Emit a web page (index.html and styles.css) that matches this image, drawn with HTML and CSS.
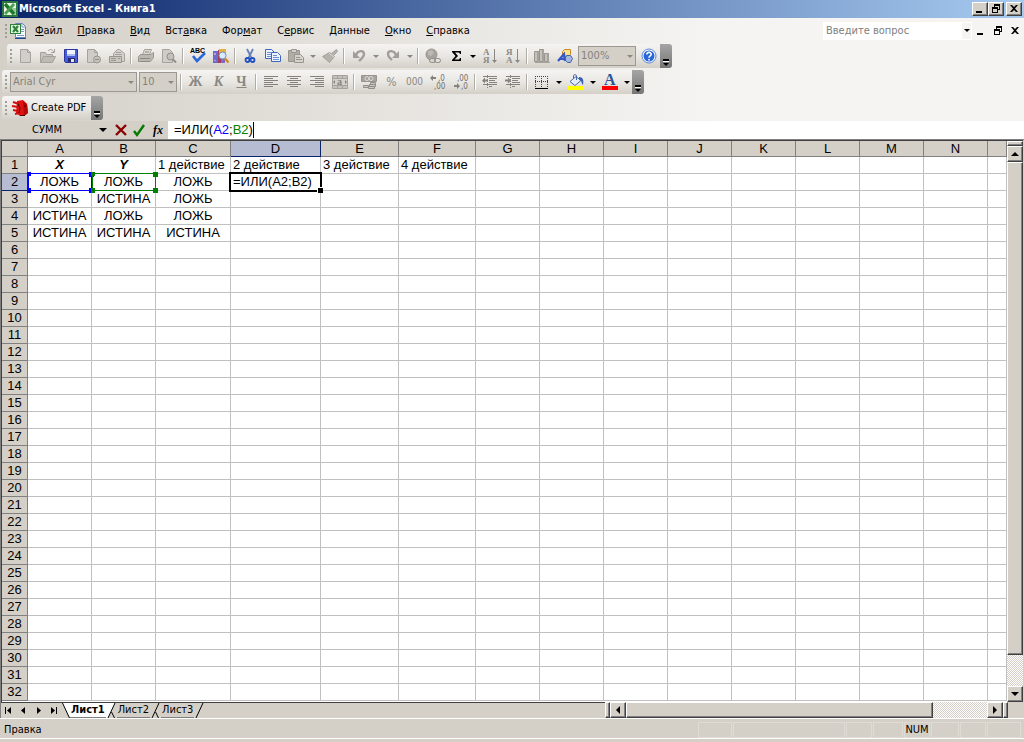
FILE: index.html
```html
<!DOCTYPE html>
<html lang="ru">
  <head>
    <meta charset="utf-8" />
    <title>Microsoft Excel - Книга1</title>
    <link rel="stylesheet" href="styles.css">
  </head>
  <body>
    <header class="titlebar">
      <svg class="icon" viewBox="0 0 16 16"><path fill="#2b7a3b" d="M0 0h16v16H0z"/><path fill="#e9f4e6" d="M2 2h12v12H2z"/><path fill="#9ccb98" d="M10 7h4v7h-4z"/><path stroke="#1c7a2c" stroke-width="3.400" d="M3 3l9 10"/><path stroke="#4aa04c" stroke-width="2.800" d="M12 3L3 13"/></svg>
      <h1>Microsoft Excel - Книга1</h1>
      <div class="window-buttons">
        <button aria-label="Свернуть"><svg viewBox="0 0 12 10"><path d="M2 7h6v2H2z"/></svg></button>
        <button aria-label="Восстановить"><svg viewBox="0 0 12 10"><path fill-rule="evenodd" d="M4 0h6v6H8v3H2V3h2zM5 2v1h3v2h1V2zM3 5v3h4V5z"/></svg></button>
        <button class="close" aria-label="Закрыть"><svg viewBox="0 0 12 10"><path d="M2 1h2l2 2 2-2h2L7 4.500l3 3.500H8L6 6 4 8H2l3-3.500z"/></svg></button>
      </div>
    </header>

    <div class="docks">
      <nav class="menubar">
        <span class="grip"></span>
        <svg class="icon" viewBox="0 0 16 16"><path fill="#f8fbff" stroke="#6382b8" d="M5.500.5h7l3 3v11h-10z"/><path fill="none" stroke="#7d9bd0" d="M12 1v3h3M11 6.500h3M11 8.500h3M7 12.500h7"/><path fill="#2d8239" d="M0 1h11v10H0z"/><path fill="#e8f4e4" d="M1 2h9v8H1z"/><path stroke="#2d8239" stroke-width="2.200" d="M3 3l5 6M8 3L3 9"/><path stroke="#27458a" d="M5 15.500h11"/></svg>
        <button><u>Ф</u>айл</button>
        <button><u>П</u>равка</button>
        <button><u>В</u>ид</button>
        <button>Вст<u>а</u>вка</button>
        <button>Фор<u>м</u>ат</button>
        <button>С<u>е</u>рвис</button>
        <button><u>Д</u>анные</button>
        <button><u>О</u>кно</button>
        <button><u>С</u>правка</button>
        <div class="question">
          <input type="text" placeholder="Введите вопрос" aria-label="Введите вопрос">
          <button class="drop" aria-label="Список вопросов"></button>
        </div>
        <div class="book-buttons">
          <button aria-label="Свернуть окно"><svg viewBox="0 0 12 10"><path d="M2 7h6v2H2z"/></svg></button>
          <button aria-label="Восстановить окно"><svg viewBox="0 0 12 10"><path fill-rule="evenodd" d="M4 0h6v6H8v3H2V3h2zM5 2v1h3v2h1V2zM3 5v3h4V5z"/></svg></button>
          <button aria-label="Закрыть окно"><svg viewBox="0 0 12 10"><path d="M2 1h2l2 2 2-2h2L7 4.500l3 3.500H8L6 6 4 8H2l3-3.500z"/></svg></button>
        </div>
      </nav>

      <div class="toolbar standard">
        <span class="grip"></span>
        <button class="tool" disabled aria-label="Создать"><svg viewBox="0 0 16 16"><path fill="#d2cfca" stroke="#a5a29d" d="M3.500 1.500h7l3 3v10h-10z"/><path fill="none" stroke="#a5a29d" d="M10.500 1.500v3h3"/></svg></button>
        <button class="tool" disabled aria-label="Открыть"><svg viewBox="0 0 16 16"><path fill="#c7c4be" stroke="#a5a29d" d="M.5 14.500v-10h5l1 2h6v2"/><path fill="#bebbb5" stroke="#a5a29d" d="M.5 14.500l3-6h12l-3 6z"/><path fill="none" stroke="#a5a29d" d="M8 3c2-2 4-2 6 1M14.500 1v3.500H11"/></svg></button>
        <button class="tool" aria-label="Сохранить"><svg viewBox="0 0 16 16"><path fill="#4a5cd6" stroke="#2a35a0" d="M1.500 1.500h13v13h-12l-1-1z"/><path fill="#eef3fd" d="M4 2h8v6H4z"/><path fill="#a9bcf0" d="M4 6h8v2H4z"/><path fill="#252c6e" d="M5 10h7v4H5z"/><path fill="#e4e6ee" d="M8 11h3v3H8z"/></svg></button>
        <button class="tool" disabled aria-label="Разрешения"><svg viewBox="0 0 16 16"><path fill="#cfccc7" stroke="#a5a29d" d="M1.500 1.500h7l3 3v10h-10z"/><path fill="none" stroke="#a5a29d" d="M8.500 1.500v3h3"/><circle cx="11" cy="11.500" r="3.500" fill="#c5c2bc" stroke="#98958f"/><path fill="#8f8c87" d="M9 11h4v1H9z"/></svg></button>
        <button class="tool" disabled aria-label="Отправить"><svg viewBox="0 0 16 16"><path fill="#d5d2cd" stroke="#a5a29d" d="M4.500 5.500l4-4h2l5 4v8h-11z"/><path fill="none" stroke="#a5a29d" d="M7 4.500h5M6 6.500h7"/><path fill="#cac7c1" stroke="#98958f" d="M.5 8.500h12v6H.5z"/><path fill="none" stroke="#98958f" d="M2 10.500h5M9 10.500h2M2 12.500h5"/></svg></button>
        <span class="separator"></span>
        <button class="tool" disabled aria-label="Печать"><svg viewBox="0 0 16 16"><path fill="#dddad6" stroke="#a5a29d" d="M4.500 6.500l2-5h7l-2 5"/><path fill="#bbb8b2" stroke="#98958f" d="M2.500 6.500h10l3-2v5l-3 4h-12v-5z"/><path fill="none" stroke="#8d8a85" d="M2 10.500h10M3 13.500h8M7 4h4"/></svg></button>
        <button class="tool" disabled aria-label="Предварительный просмотр"><svg viewBox="0 0 16 16"><path fill="#d0cdc8" stroke="#a5a29d" d="M1.500 1.500h7l3 3v10h-10z"/><circle cx="9.500" cy="8.500" r="3.500" fill="#c4c1bb" stroke="#918e89"/><path stroke="#918e89" stroke-width="2" d="M12 11.500l3 3"/></svg></button>
        <span class="separator"></span>
        <button class="tool" aria-label="Орфография"><svg viewBox="0 0 16 16"><text x="0" y="5" class="abc">ABC</text><path fill="none" stroke="#2b68d8" stroke-width="2.600" d="M3 8l4 5 8-8"/></svg></button>
        <button class="tool" aria-label="Справочные материалы"><svg viewBox="0 0 16 16"><path fill="#6a6cc8" d="M0 3h5v12H0z"/><path fill="#b9a2dc" d="M1 5h2v2H1zM1 12h2v1H1z"/><path fill="#a43d5d" d="M5 2h3v13H5z"/><path fill="#e2b23c" d="M6 1h7v6H6z"/><path fill="#7c6bc8" d="M8 11h4v4H8z"/><circle cx="9.500" cy="7.500" r="3.500" fill="#d7ecff" stroke="#7d8cb0"/><path stroke="#d08a25" stroke-width="2.400" d="M12 10.500l3.500 4"/></svg></button>
        <span class="separator"></span>
        <button class="tool" aria-label="Вырезать"><svg viewBox="0 0 16 16"><path stroke="#6582b8" stroke-width="1.800" d="M5 1l4.500 9M11 1L6.500 10"/><circle cx="5.500" cy="12" r="2" fill="none" stroke="#1f4fc0" stroke-width="1.800"/><circle cx="10.500" cy="12" r="2" fill="none" stroke="#1f4fc0" stroke-width="1.800"/></svg></button>
        <button class="tool" aria-label="Копировать"><svg viewBox="0 0 16 16"><path fill="#edf4ff" stroke="#3f66b8" d="M.5 1.500h6l3 3v6h-9z"/><path stroke="#6c8fd4" d="M2 4.500h4M2 6.500h5M2 8.500h5"/><path fill="#edf4ff" stroke="#3f66b8" d="M6.500 4.500h6l3 3v6h-9z"/><path stroke="#6c8fd4" d="M8 7.500h4M8 9.500h6M8 11.500h6"/></svg></button>
        <button class="tool" disabled aria-label="Вставить"><svg viewBox="0 0 16 16"><path fill="#b0ada7" stroke="#98958f" d="M.5 2.500h11v11H.5z"/><path fill="#d5d2cd" stroke="#98958f" d="M3.500 1.500h5v3h-5zM6.500 6.500h6l3 3v5h-9z"/><path stroke="#98958f" d="M8 9.500h4M8 11.500h6"/></svg></button>
        <button class="drop off" disabled aria-label="Параметры вставки"></button>
        <button class="tool" disabled aria-label="Формат по образцу"><svg viewBox="0 0 16 16"><path fill="#b5b2ac" stroke="#a5a29d" d="M14.500 1.500l-5 4-2-1-7 4 7 6 5-6-1-1 4-4z"/><path stroke="#dedbd6" d="M7 5l5 4"/></svg></button>
        <span class="separator"></span>
        <button class="tool" disabled aria-label="Отменить"><svg viewBox="0 0 16 16"><path fill="none" stroke="#a19e99" stroke-width="2.400" d="M5 7c2-5 8-5 8-1 0 3-2 4-5 7"/><path fill="#a19e99" d="M2 3v7h7z"/></svg></button>
        <button class="drop off" disabled aria-label="Список отмены"></button>
        <button class="tool" disabled aria-label="Вернуть"><svg viewBox="0 0 16 16"><path fill="none" stroke="#a19e99" stroke-width="2.400" d="M11 7C9 2 3 2 3 6c0 3 2 4 4 6"/><path fill="#a19e99" d="M14 3v7H7z"/></svg></button>
        <button class="drop off" disabled aria-label="Список возврата"></button>
        <span class="separator"></span>
        <button class="tool" disabled aria-label="Гиперссылка"><svg viewBox="0 0 16 16"><circle cx="6.500" cy="6.500" r="5.500" fill="#a5a29d" stroke="#989590"/><path fill="#bcb9b3" d="M3 3l4-1 2 3-3 3-3-1z"/><rect x="4.500" y="10.500" width="6" height="4" rx="2" fill="#d5d2cd" stroke="#8d8a85"/><rect x="9.500" y="10.500" width="6" height="4" rx="2" fill="none" stroke="#8d8a85"/></svg></button>
        <button class="tool" aria-label="Автосумма"><svg viewBox="0 0 16 16"><path d="M4 3h9v3h-1l-1-1.500H7L10 8l-3.500 3.500H11l1-1.500h1v3H4v-1l3.500-4L4 4z"/></svg></button>
        <button class="drop" aria-label="Функции"></button>
        <button class="tool" disabled aria-label="Сортировка по возрастанию"><svg viewBox="0 0 16 16"><text x="1" y="7" class="az">А</text><text x="1" y="15" class="az">Я</text><path fill="#8b8883" d="M12 1h1v11h2l-2.500 3-2.500-3h2z"/></svg></button>
        <button class="tool" disabled aria-label="Сортировка по убыванию"><svg viewBox="0 0 16 16"><text x="1" y="7" class="az">Я</text><text x="1" y="15" class="az">А</text><path fill="#8b8883" d="M12 1h1v11h2l-2.500 3-2.500-3h2z"/></svg></button>
        <span class="separator"></span>
        <button class="tool" disabled aria-label="Мастер диаграмм"><svg viewBox="0 0 16 16"><path fill="#c5c2bc" stroke="#98958f" d="M.5 3.500h4v10h-4zM5.500 1.500h4v12h-4zM10.500 5.500h4v8h-4z"/><path fill="#a5a29d" d="M3 4h2v10H3zM8 2h2v12H8zM13 5h2v9h-2zM1 14h15v1H1z"/></svg></button>
        <button class="tool" aria-label="Рисование"><svg viewBox="0 0 16 16"><path fill="#ffe18a" stroke="#c68b28" d="M5.500 3.500l2-2h6v5l-2 2h-6z"/><path fill="#a5b8df" stroke="#4a639f" d="M9.500 7.500h4l2 3-2 4h-3l-3-3z"/><path fill="none" stroke="#3559c4" stroke-width="2.200" d="M1 13l6-7 1 7M3 11h5"/></svg></button>
        <div class="combo zoom">
          <select disabled aria-label="Масштаб"><option>100%</option></select>
          <span class="drop off"></span>
        </div>
        <button class="tool" aria-label="Справка"><svg viewBox="0 0 16 16"><circle cx="8" cy="8" r="7" fill="#fff" stroke="#5c86d8"/><circle cx="8" cy="8" r="5.500" fill="#2767d8"/><path fill="none" stroke="#fff" stroke-width="1.600" d="M5.800 6.500c0-3 4.600-2.600 4.400 0C10 8 8 7.800 8 9.800M8 11v1.500"/></svg></button>
        <button class="cap" aria-label="Параметры панели Стандартная"></button>
      </div>

      <div class="toolbar">
        <span class="grip"></span>
        <div class="combo font">
          <select disabled aria-label="Шрифт"><option>Arial Cyr</option></select>
          <span class="drop off"></span>
        </div>
        <div class="combo size">
          <select disabled aria-label="Размер"><option>10</option></select>
          <span class="drop off"></span>
        </div>
        <span class="separator"></span>
        <button class="tool letter" disabled>Ж</button>
        <button class="tool letter" disabled><i>К</i></button>
        <button class="tool letter" disabled><u>Ч</u></button>
        <span class="separator"></span>
        <button class="tool" disabled aria-label="По левому краю"><svg viewBox="0 0 16 16"><path stroke="#85827d" d="M1 2.500h14M1 4.500h9M1 6.500h14M1 8.500h9M1 10.500h14M1 12.500h9"/></svg></button>
        <button class="tool" disabled aria-label="По центру"><svg viewBox="0 0 16 16"><path stroke="#85827d" d="M1 2.500h14M4 4.500h8M1 6.500h14M4 8.500h8M1 10.500h14M4 12.500h8"/></svg></button>
        <button class="tool" disabled aria-label="По правому краю"><svg viewBox="0 0 16 16"><path stroke="#85827d" d="M1 2.500h14M6 4.500h9M1 6.500h14M6 8.500h9M1 10.500h14M6 12.500h9"/></svg></button>
        <button class="tool" disabled aria-label="Объединить ячейки"><svg viewBox="0 0 16 16"><path fill="#c4c1bb" stroke="#a5a29d" d="M.5 1.500h15v13H.5zM.5 4.500h15M.5 11.500h15M5.500 1.500v3M10.500 1.500v3M5.500 11.500v3M10.500 11.500v3"/><path fill="#d4d1cb" d="M1 5h14v6H1z"/><text x="5" y="11" class="merge">a</text><path fill="#85827d" d="M1 8l2-2v4zM15 8l-2-2v4z"/></svg></button>
        <span class="separator"></span>
        <button class="tool" disabled aria-label="Денежный формат"><svg viewBox="0 0 16 16"><path fill="#a5a29d" stroke="#98958f" d="M.5 1.500h15v6H.5z"/><circle cx="6" cy="4.500" r="2" fill="none" stroke="#dedbd6"/><circle cx="10" cy="4.500" r="2" fill="none" stroke="#dedbd6"/><path fill="#c9c6c0" stroke="#918e89" d="M9.500 8.500h5v2h-5zM8.500 10.500h6v2h-6zM2.500 11.500h5v2h-5zM7.500 12.500h6v2h-6z"/></svg></button>
        <button class="tool number percent" disabled>%</button>
        <button class="tool number" disabled>000</button>
        <button class="tool" disabled aria-label="Увеличить разрядность"><svg viewBox="0 0 16 16"><path fill="#85827d" d="M0 4l3-3v2h3v2H3v2z"/><text x="8" y="7" class="digits">,0</text><text x="4" y="15" class="digits">,00</text></svg></button>
        <button class="tool" disabled aria-label="Уменьшить разрядность"><svg viewBox="0 0 16 16"><text x="4" y="7" class="digits">,00</text><path fill="#85827d" d="M7 12L4 9v2H1v2h3v2z"/><text x="8" y="15" class="digits">,0</text></svg></button>
        <span class="separator"></span>
        <button class="tool" disabled aria-label="Уменьшить отступ"><svg viewBox="0 0 16 16"><path stroke="#85827d" d="M1 2.500h14M7 4.500h8M7 6.500h6M7 8.500h8M1 10.500h14M7 12.500h3"/><path stroke="#85827d" stroke-dasharray="1 1" d="M5.500 1v14"/><path fill="#85827d" d="M0 6.500l3-3v2h3v2H3v2z"/></svg></button>
        <button class="tool" disabled aria-label="Увеличить отступ"><svg viewBox="0 0 16 16"><path stroke="#85827d" d="M1 2.500h14M7 4.500h8M7 6.500h6M7 8.500h8M1 10.500h14M7 12.500h3"/><path stroke="#85827d" stroke-dasharray="1 1" d="M5.500 1v14"/><path fill="#85827d" d="M6 6.500l-3-3v2H0v2h3v2z"/></svg></button>
        <span class="separator"></span>
        <button class="tool" aria-label="Границы"><svg viewBox="0 0 16 16"><path fill="none" stroke="#444" stroke-dasharray="1 1" d="M1.500 2v11M7.500 2v11M13.500 2v11M1 2.500h13M1 7.500h13"/><path d="M1 14h13v1H1z"/></svg></button>
        <button class="drop" aria-label="Виды границ"></button>
        <button class="tool" aria-label="Цвет заливки"><svg viewBox="0 0 16 16"><path fill="#e3edfb" stroke="#4d6ca8" d="M2 7.500l6-5 5 4-6 5z"/><path fill="none" stroke="#4d6ca8" d="M8.500 6V1.500c0-1-3-1-3 0v3"/><path fill="#3560b4" d="M11 3c4 0 5 3 4 8-2-2-1-5-4-5z"/><path fill="#ff0" d="M0 12h16v4H0z"/></svg></button>
        <button class="drop" aria-label="Цвета заливки"></button>
        <button class="tool" aria-label="Цвет шрифта"><svg viewBox="0 0 16 16"><text x="2" y="11" class="color">A</text><path fill="red" d="M0 12h16v4H0z"/></svg></button>
        <button class="drop" aria-label="Цвета шрифта"></button>
        <button class="cap" aria-label="Параметры панели Форматирование"></button>
      </div>

      <div class="toolbar">
        <span class="grip"></span>
        <button class="pdf"><svg class="icon" viewBox="0 0 16 16"><path fill="#e01212" d="M5 1l6-1 4 4 1 9-4 3H8l-4-3z"/><path fill="#b50a0a" d="M11 1l4 3 1 9-4 3z"/><path stroke="#d01010" stroke-width="2" d="M1 2l6 2M0 6l6 1M1 10l5 1M3 14l4-1"/><path fill="none" stroke="#4c0505" d="M6 4l2 4-1 5M12 6h2M8 15.500h5"/></svg>Create PDF</button>
        <button class="cap" aria-label="Параметры панели Create PDF"></button>
      </div>
    </div>

    <div class="formula-bar">
      <input class="name-box" type="text" value="СУММ" aria-label="Имя">
      <button class="drop big" aria-label="Список функций"></button>
      <button aria-label="Отмена"><svg viewBox="0 0 14 14"><path fill="none" stroke="#8b0000" stroke-width="2.400" d="M2 2l10 10M12 2L2 12"/></svg></button>
      <button aria-label="Ввод"><svg viewBox="0 0 14 14"><path fill="none" stroke="#007a00" stroke-width="2.400" d="M2 8l3 4 7-10"/></svg></button>
      <button class="fx" aria-label="Вставка функции"><i>fx</i></button>
      <div class="formula" contenteditable="true" role="textbox" aria-label="Строка формул">=ИЛИ(<span class="ref-a">A2</span>;<span class="ref-b">B2</span>)<span class="caret"></span></div>
    </div>

    <main class="book">
      <div class="sheet">
        <table>
          <colgroup>
            <col class="col-head"><col><col><col class="col-c"><col class="col-d"><col class="col-e"><col class="col-f">
            <col><col><col><col><col><col><col><col><col class="col-rest">
          </colgroup>
          <thead>
            <tr>
              <th></th><th>A</th><th>B</th><th>C</th><th class="current">D</th><th>E</th><th>F</th><th>G</th>
              <th>H</th><th>I</th><th>J</th><th>K</th><th>L</th><th>M</th><th>N</th><th></th>
            </tr>
          </thead>
          <tbody id="rows"></tbody>
        </table>
      </div>
      <div class="scroll vertical">
        <span class="split"></span>
        <button class="arrow up" aria-label="Вверх"></button>
        <div class="track"><span class="thumb"></span></div>
        <button class="arrow down" aria-label="Вниз"></button>
      </div>
    </main>

    <div class="bottom">
      <div class="tabs">
        <button class="nav" aria-label="Первый лист"><svg viewBox="0 0 9 9"><path d="M1 1h1v7H1zM3 4.500L7 1v7z"/></svg></button>
        <button class="nav" aria-label="Предыдущий лист"><svg viewBox="0 0 9 9"><path d="M2 4.500L6 1v7z"/></svg></button>
        <button class="nav" aria-label="Следующий лист"><svg viewBox="0 0 9 9"><path d="M7 4.500L3 1v7z"/></svg></button>
        <button class="nav" aria-label="Последний лист"><svg viewBox="0 0 9 9"><path d="M7 1h1v7H7zM6 4.500L2 1v7z"/></svg></button>
        <svg class="edge first" viewBox="0 0 8 15"><path fill="#fff" d="M0 0h8v15z"/><path stroke="#000" d="M.5 0l7 15"/></svg>
        <button class="tab active">Лист1</button>
        <svg class="edge" viewBox="0 0 11 15"><path fill="#fff" d="M0 0h9L2 15H0z"/><path stroke="#000" d="M9 0L2 15M5.500 9l3 6"/></svg>
        <button class="tab">Лист2</button>
        <svg class="edge" viewBox="0 0 11 15"><path stroke="#000" d="M9 0L2 15M5.500 9l3 6"/></svg>
        <button class="tab">Лист3</button>
        <svg class="edge" viewBox="0 0 11 15"><path stroke="#000" d="M9 0L2 15"/></svg>
      </div>
      <div class="scroll horizontal">
        <span class="split"></span>
        <button class="arrow left" aria-label="Влево"></button>
        <div class="track"><span class="thumb"></span></div>
        <button class="arrow right" aria-label="Вправо"></button>
        <span class="split"></span>
      </div>
    </div>

    <footer class="status">
      <span class="mode">Правка</span>
      <span class="pane w34"></span>
      <span class="pane w112"></span>
      <span class="pane w26"></span>
      <span class="pane w30"></span>
      <span class="pane w26">NUM</span>
      <span class="pane w28"></span>
      <span class="pane w26"></span>
      <span class="pane w34"></span>
    </footer>

    <script src="sheet.js"></script>
  </body>
</html>
```

FILE: styles.css
```css
:root {
  --face: #d4d0c8;
  --light: #f5f4f2;
  --shadow: #808080;
  --dark: #404040;
  --line: #c0c0c0;
  --current: #b6bdd2;
  --navy: #0a246a;
}

* {
  box-sizing: border-box;
}

body {
  margin: 0;
  height: 100vh;
  display: flex;
  flex-direction: column;
  overflow: hidden;
  background: var(--face);
  color: #000;
  font: 11px/14px "DejaVu Sans Condensed", "DejaVu Sans", sans-serif;
}

button,
input,
select {
  font: inherit;
  color: inherit;
  background: none;
  border: 0;
  border-radius: 0;
  padding: 0;
  margin: 0;
}

svg {
  display: block;
  width: 16px;
  height: 16px;
  flex: none;
  overflow: visible;
}

/* title bar */
.titlebar {
  height: 18px;
  flex: none;
  display: flex;
  align-items: center;
  gap: 1px;
  padding: 0 2px;
  color: #fff;
  background: linear-gradient(90deg, #0a246a, #a6caf0);
}

.titlebar h1 {
  flex: 1;
  margin: 0;
  font-size: 11px;
  line-height: 14px;
}

.window-buttons {
  display: flex;
}

.window-buttons button {
  width: 16px;
  height: 14px;
  padding: 1px;
  background: var(--face);
  border: 1px solid;
  border-color: #fff var(--dark) var(--dark) #fff;
  box-shadow: inset -1px -1px var(--shadow);
}

.window-buttons .close {
  margin-left: 2px;
}

.window-buttons svg,
.book-buttons svg {
  width: 12px;
  height: 10px;
}

/* menu and toolbars */
.docks {
  flex: none;
  display: flex;
  flex-direction: column;
  align-items: flex-start;
  gap: 2px;
  padding: 1px 0;
  background: linear-gradient(90deg, var(--face), var(--light) 70%);
}

.menubar {
  align-self: stretch;
  height: 23px;
  display: flex;
  align-items: center;
  padding-left: 4px;
}

.menubar .icon {
  margin-right: 1px;
}

.menubar > button {
  padding: 1px 7px 0 8px;
}

.grip {
  width: 6px;
  height: 16px;
  flex: none;
  background: linear-gradient(#a19e98 50%, transparent 0) 1px 1px / 2px 4px repeat-y;
}

.question {
  display: flex;
  width: 149px;
  height: 18px;
  margin-left: auto;
  background: #fff;
}

.question input {
  flex: 1;
  min-width: 0;
  padding-left: 3px;
}

.question input::placeholder {
  color: #808080;
  opacity: 1;
}

.question .drop {
  background-color: var(--light);
  border: 1px solid #fff;
}

.book-buttons {
  display: flex;
  gap: 5px;
  padding: 0 3px;
}

.toolbar {
  display: flex;
  align-items: center;
  height: 24px;
  margin-left: 2px;
  border-radius: 3px;
  background: linear-gradient(var(--light), #e9e7e3 50%, var(--face));
}

.toolbar .grip {
  margin-left: 2px;
  width: 4px;
}

.standard {
  margin-left: 7px;
}

.tool {
  width: 23px;
  height: 22px;
  display: flex;
  align-items: center;
  justify-content: center;
}

.letter {
  color: #8b8883;
  font: bold 14px "Liberation Serif", serif;
}

.number {
  color: #8b8883;
  font-size: 10px;
}

.percent {
  font-size: 12px;
}

.separator {
  width: 2px;
  height: 16px;
  margin: 0 2px;
  background: linear-gradient(90deg, #b0ada6 50%, #fff 50%);
}

.drop {
  width: 11px;
  height: 18px;
  flex: none;
  display: flex;
  align-items: center;
  justify-content: center;
}

.drop::before {
  content: "";
  border: 3px solid transparent;
  border-top-color: #000;
  border-bottom: 0;
}

.drop.big::before {
  border-width: 4px 4px 0;
}

.drop.off::before {
  border-top-color: #8b8883;
}

.combo {
  display: flex;
  height: 20px;
  align-items: center;
  color: #85827d;
  background: var(--face);
  border: 1px solid #9b9893;
}

.combo select {
  flex: 1;
  min-width: 0;
  height: 18px;
  padding-left: 2px;
  appearance: none;
  opacity: 1;
}

.combo.font {
  width: 127px;
  margin-left: 2px;
}

.combo.size {
  width: 38px;
  margin: 0 1px 0 2px;
}

.combo.zoom {
  width: 58px;
  margin: 0 1px 0 2px;
}

/* overflow handle at the right end of a toolbar */
.cap {
  width: 12px;
  height: 24px;
  display: flex;
  flex-direction: column;
  align-items: center;
  justify-content: flex-end;
  gap: 1px;
  padding-bottom: 2px;
  border-radius: 0 3px 3px 0;
  background: linear-gradient(#a5a5a5, #767676);
}

.cap::before {
  content: "";
  width: 6px;
  height: 2px;
  background: #000;
  border-bottom: 1px solid #fff;
}

.cap::after {
  content: "";
  border: 3px solid transparent;
  border-top: 3px solid #000;
  border-bottom: 0;
}

.pdf {
  display: flex;
  align-items: center;
  gap: 3px;
  padding: 0 5px 0 4px;
}

.abc {
  font: bold 7px "Liberation Sans", sans-serif;
}

.az {
  font: bold 9px "Liberation Serif", serif;
  fill: #8b8883;
}

.merge {
  font: bold 10px "Liberation Serif", serif;
  fill: #85827d;
}

.digits {
  font: 8px "DejaVu Sans Condensed", sans-serif;
  fill: #74716c;
}

.color {
  font: bold 16px "Liberation Serif", serif;
  fill: #2f5597;
}

/* formula bar */
.formula-bar {
  height: 18px;
  flex: none;
  display: flex;
  align-items: center;
}

.formula-bar button {
  width: 18px;
  height: 18px;
  display: flex;
  align-items: center;
  justify-content: center;
}

.formula-bar svg {
  width: 14px;
  height: 14px;
}

.name-box {
  width: 94px;
  text-align: center;
}

.formula-bar .fx {
  width: 20px;
  font: bold 12px "Liberation Serif", serif;
}

.formula {
  flex: 1;
  align-self: stretch;
  display: flex;
  align-items: center;
  padding-left: 6px;
  background: #fff;
  outline: 0;
  font: 13px/16px "Liberation Sans", sans-serif;
}

.ref-a {
  color: #00f;
}

.ref-b {
  color: #008000;
}

.caret {
  width: 1px;
  height: 16px;
  background: #000;
}

/* worksheet */
.book {
  flex: 1;
  min-height: 0;
  display: flex;
  border: solid var(--shadow);
  border-width: 1px 0 0 1px;
  padding-right: 1px;
}

.sheet {
  flex: 1;
  min-width: 0;
  overflow: hidden;
  background: #fff;
  border: solid var(--dark);
  border-width: 1px 0 0 1px;
}

table {
  width: 100%;
  table-layout: fixed;
  border-spacing: 0;
  font: 13px/16px "Liberation Sans", sans-serif;
}

col {
  width: 64px;
}

.col-head {
  width: 26px;
}

.col-c {
  width: 75px;
}

.col-d {
  width: 90px;
}

.col-e {
  width: 78px;
}

.col-f {
  width: 77px;
}

.col-rest {
  width: auto;
}

th,
td {
  height: 17px;
  padding: 0;
  border: solid var(--line);
  border-width: 0 1px 1px 0;
  font-weight: normal;
  white-space: nowrap;
}

th {
  background: var(--face);
  border-color: var(--shadow);
}

thead th {
  height: 16px;
  line-height: 15px;
}

th.current {
  background: var(--current);
  border-color: var(--navy);
}

td {
  padding-left: 2px;
}

.center {
  padding: 0;
  text-align: center;
}

.title {
  font-weight: bold;
  font-style: italic;
}

.range,
.editing {
  position: relative;
}

.range::before {
  content: "";
  position: absolute;
  inset: -1px -1px -1px 0;
  border: 1px solid;
}

.range::after {
  content: "";
  position: absolute;
  inset: -2px -3px -3px -1px;
  background:
    linear-gradient(currentColor 0 0) 0 0 / 4px 4px no-repeat,
    linear-gradient(currentColor 0 0) 100% 0 / 5px 5px no-repeat,
    linear-gradient(currentColor 0 0) 0 100% / 4px 5px no-repeat,
    linear-gradient(currentColor 0 0) 100% 100% / 5px 5px no-repeat;
}

.range span {
  color: #000;
}

.editing::before {
  content: "";
  position: absolute;
  inset: -2px -2px -2px -2px;
  border: 2px solid #000;
}

.editing::after {
  content: "";
  position: absolute;
  right: -3px;
  bottom: -3px;
  width: 5px;
  height: 5px;
  background: #000;
  border: solid #fff;
  border-width: 1px 0 0 1px;
}

/* scroll bars */
.scroll {
  display: flex;
}

.vertical {
  width: 16px;
  flex-direction: column;
  border-top: 1px solid var(--dark);
}

.split,
.arrow,
.thumb {
  flex: none;
  background: var(--face);
  border: 1px solid;
  border-color: #fff var(--dark) var(--dark) #fff;
  box-shadow: inset -1px -1px var(--shadow);
}

.vertical .split {
  height: 5px;
}

.arrow {
  width: 16px;
  height: 16px;
  display: flex;
  align-items: center;
  justify-content: center;
}

.arrow::before {
  content: "";
  border: 4px solid transparent;
}

.arrow.up::before {
  border-bottom-color: #000;
  border-top: 0;
}

.arrow.down::before {
  border-top-color: #000;
  border-bottom: 0;
}

.arrow.left::before {
  border-right-color: #000;
  border-left: 0;
}

.arrow.right::before {
  border-left-color: #000;
  border-right: 0;
}

.track {
  flex: 1;
  display: flex;
  background: repeating-conic-gradient(#fff 0 25%, var(--face) 0 50%) 0 0 / 2px 2px;
}

.vertical .track {
  flex-direction: column;
}

.vertical .thumb {
  height: 94%;
}

.horizontal .thumb {
  width: 85%;
}

/* sheet tabs */
.bottom {
  height: 16px;
  flex: none;
  display: flex;
  padding-right: 16px;
  border-left: 1px solid var(--shadow);
}

.tabs {
  flex: 3;
  display: flex;
  border-top: 1px solid var(--dark);
}

.horizontal {
  flex: 2;
}

.horizontal .split {
  width: 5px;
}

.nav {
  width: 15px;
  display: flex;
  align-items: center;
  justify-content: center;
}

.nav svg {
  width: 9px;
  height: 9px;
}

.edge {
  width: 11px;
  height: 15px;
}

.edge.first {
  width: 8px;
  margin-left: 1px;
}

.tab {
  padding: 0 1px;
  border-bottom: 1px solid var(--shadow);
}

.tab.active {
  background: #fff;
  font-weight: bold;
}

/* status bar */
.status {
  height: 24px;
  flex: none;
  display: flex;
  align-items: center;
  gap: 1px;
  padding: 0 3px 2px 4px;
  border-top: 1px solid #fff;
  box-shadow: inset 0 -3px var(--face), inset 0 -4px #fff;
}

.mode {
  flex: 1;
}

.pane {
  height: 16px;
  text-align: center;
  border: 1px solid #dfdcd6;
}

.w26 {
  width: 26px;
}

.w28 {
  width: 28px;
}

.w30 {
  width: 30px;
}

.w34 {
  width: 34px;
}

.w112 {
  width: 112px;
}
```

FILE: sheet.js
```js
const ROWS = 32;
const COLS = 15;

const data = [
  ["X", "Y", "1 действие", "2 действие", "3 действие", "4 действие"],
  ["ЛОЖЬ", "ЛОЖЬ", "ЛОЖЬ", "=ИЛИ(A2;B2)"],
  ["ЛОЖЬ", "ИСТИНА", "ЛОЖЬ"],
  ["ИСТИНА", "ЛОЖЬ", "ЛОЖЬ"],
  ["ИСТИНА", "ИСТИНА", "ИСТИНА"],
];

const classes = {
  "0,0": "title",
  "0,1": "title",
  "1,0": "range ref-a",
  "1,1": "range ref-b",
  "1,3": "editing",
};

const body = document.getElementById("rows");

for (let r = 0; r < ROWS; r++) {
  const row = body.insertRow();
  const head = document.createElement("th");
  head.textContent = r + 1;
  if (r === 1) head.className = "current";
  row.appendChild(head);

  for (let c = 0; c < COLS; c++) {
    const cell = row.insertCell();
    const text = (data[r] || [])[c];
    if (!text) continue;
    const span = document.createElement("span");
    span.textContent = text;
    cell.appendChild(span);
    cell.className = classes[r + "," + c] || "";
    // logical values and the X / Y titles are centered
    if (c < 2 || (c === 2 && r > 0)) cell.classList.add("center");
  }
}
```
